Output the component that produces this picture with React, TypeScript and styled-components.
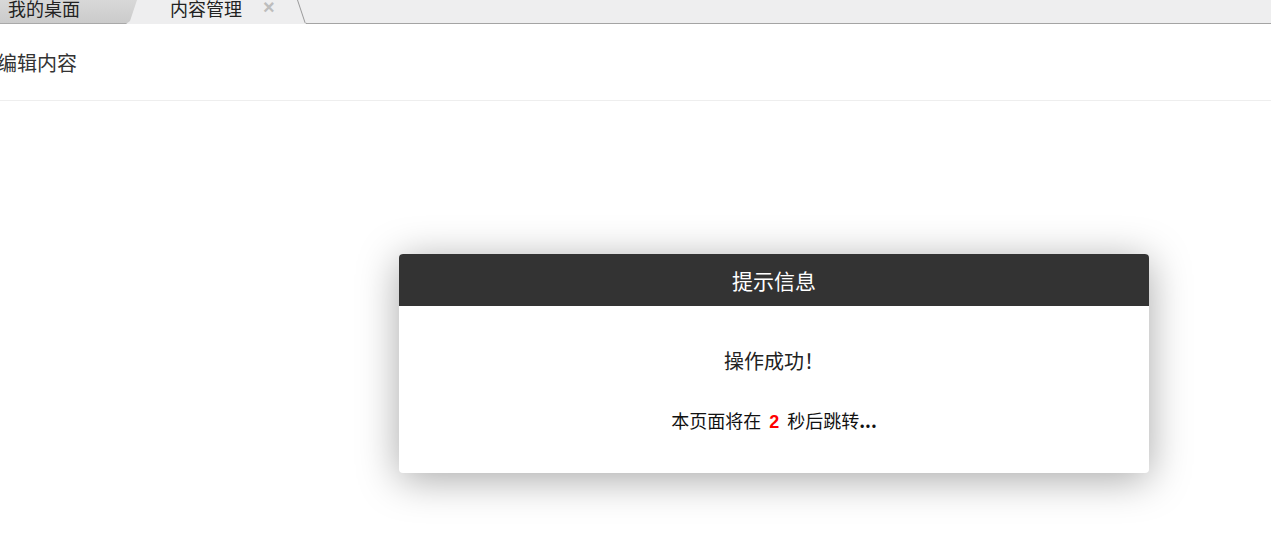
import React from 'react'
import styled, { createGlobalStyle } from 'styled-components'

const Global = createGlobalStyle`
  html, body {
    margin: 0;
    padding: 0;
    background: #fff;
    font-family: "Noto Sans CJK SC", "Liberation Sans", sans-serif;
    overflow: hidden;
  }
`

export default function App() {
  return (
    <Page>
      <Global />
      <TabBar>
        <HomeTab>我的桌面</HomeTab>
        <ActiveTab>
          <TabLabel>内容管理</TabLabel>
          <Close>×</Close>
        </ActiveTab>
        <TabEdge width="10" height="24" viewBox="0 0 10 24">
          <path d="M0.5 0 L8 22.5 Q8.5 23.5 10 23.5" fill="none" stroke="#9a9a9a" strokeWidth="1" />
        </TabEdge>
        <Filler />
      </TabBar>
      <PageHead>编辑内容</PageHead>

      <Dialog>
        <DialogHead>提示信息</DialogHead>
        <DialogBody>
          <Message>操作成功！</Message>
          <Jump>
            本页面将在<Count>2</Count>秒后跳转<Dots>...</Dots>
          </Jump>
        </DialogBody>
      </Dialog>
    </Page>
  )
}

const Page = styled.div`
  position: relative;
  width: 1271px;
  height: 556px;
  background: #fff;
`

const TabBar = styled.div`
  display: flex;
  height: 24px;
  background: #eeeeef;
`

const HomeTab = styled.div`
  width: 129px;
  padding-left: 8px;
  height: 23px;
  font-size: 18px;
  line-height: 16px;
  color: #222;
  background: linear-gradient(#d8d8d8, #cbcbcb);
  border-bottom: 1px solid #a9a9a9;
  clip-path: polygon(0 0, 137px 0, 130px 21px, 126px 24px, 0 24px);
  overflow: hidden;
`

const ActiveTab = styled.div`
  display: flex;
  align-items: flex-start;
  width: 127px;
  padding-left: 33px;
  height: 24px;
`

const TabLabel = styled.span`
  font-size: 18px;
  line-height: 16px;
  color: #222;
`

const Close = styled.span`
  margin-left: 21px;
  font-size: 20px;
  line-height: 14px;
  font-weight: bold;
  color: #bdbdbd;
  font-family: "Liberation Sans", sans-serif;
`

const TabEdge = styled.svg`
  display: block;
  flex-shrink: 0;
`

const Filler = styled.div`
  flex: 1;
  height: 23px;
  border-bottom: 1px solid #a4a4a4;
`

const PageHead = styled.div`
  height: 76px;
  display: flex;
  align-items: center;
  margin-left: -3px;
  font-size: 20px;
  color: #333;
  border-bottom: 1px solid #eeeeee;
`

const Dialog = styled.div`
  position: absolute;
  left: 399px;
  top: 254px;
  width: 750px;
  background: #fff;
  border-radius: 4px;
  overflow: hidden;
  box-shadow: 0 6px 40px rgba(0, 0, 0, 0.35);
`

const DialogHead = styled.div`
  height: 52px;
  line-height: 52px;
  text-align: center;
  background: #333333;
  color: #fff;
  font-size: 21px;
`

const DialogBody = styled.div`
  display: flex;
  flex-direction: column;
  align-items: center;
  padding: 40px 0 39px;
  gap: 32px;
`

const Message = styled.div`
  font-size: 20px;
  line-height: 30px;
  color: #222;
`

const Jump = styled.div`
  font-size: 18px;
  line-height: 24px;
  color: #111;
`

const Count = styled.b`
  color: #ff0000;
  margin: 0 8px;
  font-family: "Liberation Sans", sans-serif;
`

const Dots = styled.b``
